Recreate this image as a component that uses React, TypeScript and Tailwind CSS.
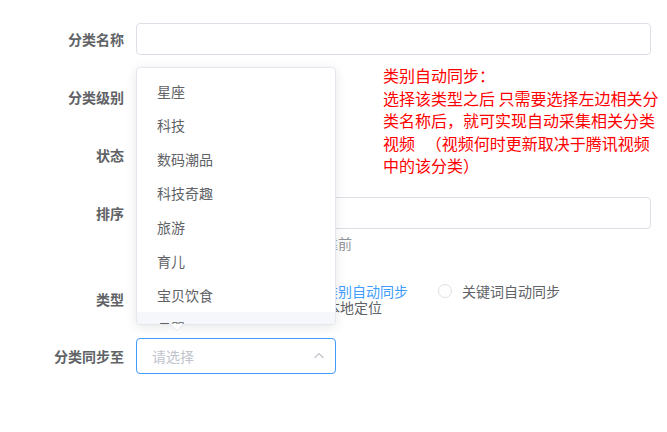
import React from 'react'

const FONT = { fontFamily: '"Noto Sans CJK SC", "Noto Sans", sans-serif' }

const levelOptions = ['星座', '科技', '数码潮品', '科技奇趣', '旅游', '育儿', '宝贝饮食', '母婴']

function Label({ text }: { text: string }) {
  return (
    <div className="w-[136px] shrink-0 pr-3 text-right text-[14px] font-bold leading-8 text-[#606266]">
      {text}
    </div>
  )
}

function Radio({ label, checked }: { label: string; checked?: boolean }) {
  return (
    <label className="mr-[30px] flex items-center whitespace-nowrap leading-none">
      <span
        className={
          checked
            ? 'flex h-[14px] w-[14px] items-center justify-center rounded-full border border-[#409eff] bg-[#409eff]'
            : 'h-[14px] w-[14px] rounded-full border border-[#dcdfe6] bg-white'
        }
      >
        {checked && <span className="h-1 w-1 rounded-full bg-white" />}
      </span>
      <span className={checked ? 'pl-[10px] text-[14px] text-[#409eff]' : 'pl-[10px] text-[14px] text-[#606266]'}>
        {label}
      </span>
    </label>
  )
}

function ChevronUp() {
  return (
    <svg width="12" height="12" viewBox="0 0 12 12" fill="none" stroke="#c0c4cc" strokeWidth="1.2">
      <path d="M1.5 8L6 3.5L10.5 8" />
    </svg>
  )
}

// popper of the 分类同步至 select, opened upwards
function Dropdown() {
  return (
    <div className="absolute left-[136px] top-[67px] z-10 w-[200px]">
      <div className="h-[258px] overflow-hidden rounded border border-[#e4e7ed] bg-white shadow-[0_2px_12px_0_rgba(0,0,0,0.1)]">
        <ul className="pt-[6px]">
          {levelOptions.map((o, i) => (
            <li
              key={o}
              className={
                i === levelOptions.length - 1
                  ? 'h-[34px] bg-[#f5f7fa] px-5 text-[14px] leading-[32px] text-[#606266]'
                  : 'h-[34px] px-5 text-[14px] leading-[34px] text-[#606266]'
              }
            >
              {o}
            </li>
          ))}
        </ul>
      </div>
      <div className="relative ml-[35px] h-0 w-0 border-x-[6px] border-t-[6px] border-x-transparent border-t-[#e4e7ed]">
        <div className="absolute -left-[6px] -top-[7px] h-0 w-0 border-x-[6px] border-t-[6px] border-x-transparent border-t-white" />
      </div>
    </div>
  )
}

export default function App() {
  return (
    <div className="relative h-[432px] w-[667px] overflow-hidden bg-white pt-[23px]" style={FONT}>
      <div className="mb-[26px] flex h-8">
        <Label text="分类名称" />
        <div className="h-8 w-[515px] rounded border border-[#dcdfe6] bg-white" />
      </div>

      <div className="mb-[26px] flex h-8 items-start">
        <Label text="分类级别" />
        <div className="h-8 w-[200px] shrink-0 rounded border border-[#dcdfe6]" />
        <div className="ml-[47px] mt-[-17px] shrink-0 whitespace-nowrap text-[16px] leading-[22.5px] text-[#ff0000]">
          <div>类别自动同步：</div>
          <div>选择该类型之后 只需要选择左边相关分</div>
          <div>类名称后，就可实现自动采集相关分类</div>
          <div>视频&nbsp;&nbsp;&nbsp;（视频何时更新取决于腾讯视频</div>
          <div>中的该分类）</div>
        </div>
      </div>

      <div className="mb-[26px] flex h-8 items-center">
        <Label text="状态" />
      </div>

      <div className="mb-[28px] flex">
        <Label text="排序" />
        <div className="flex flex-col">
          <div className="h-8 w-[515px] rounded border border-[#dcdfe6] bg-white" />
          <div className="pl-[6px] pt-[2px] text-[14px] leading-6 text-[#909399]">请输入整数，数值越大排序越靠前</div>
        </div>
      </div>

      <div className="mb-[23px] flex h-8 items-center">
        <Label text="类型" />
        <div className="flex w-[515px] flex-wrap">
          <div className="h-4 w-[164px]" />
          <div className="flex h-4 items-center">
            <Radio label="类别自动同步" checked />
          </div>
          <div className="flex h-4 items-center">
            <Radio label="关键词自动同步" />
          </div>
          <div className="h-4 w-[166px]" />
          <div className="flex h-4 items-center">
            <Radio label="本地定位" />
          </div>
        </div>
      </div>

      <div className="flex h-9 items-center">
        <Label text="分类同步至" />
        <div className="flex h-9 w-[200px] items-center justify-between rounded border border-[#409eff] bg-white pl-[15px] pr-[10px]">
          <span className="text-[14px] text-[#c0c4cc]">请选择</span>
          <ChevronUp />
        </div>
      </div>

      <Dropdown />
    </div>
  )
}
